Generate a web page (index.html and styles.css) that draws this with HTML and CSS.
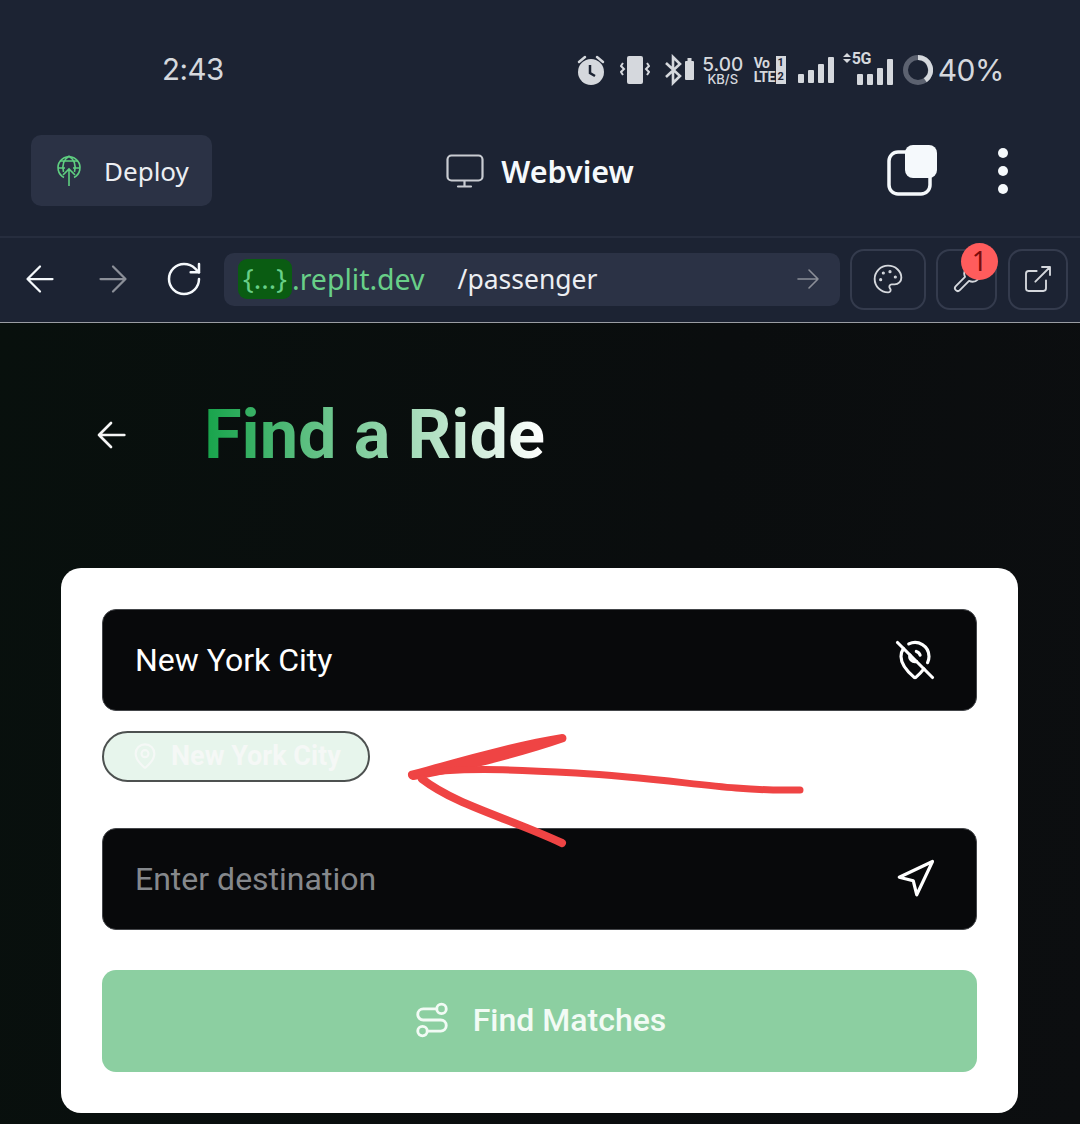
FILE: index.html
```html
<!DOCTYPE html>
<html lang="en">
<head>
    <meta charset="UTF-8">
    <meta name="viewport" content="width=device-width, initial-scale=1.0">
    <title>Find a Ride</title>
    <link rel="stylesheet" href="styles.css">
</head>
<body>
    <div class="status-bar">
        <span class="clock">2:43</span>
        <div class="status-icons">
            <svg class="st-alarm" width="28" height="30" viewBox="0 0 28 30">
                <path d="M2 7l6-5M26 7l-6-5" stroke="#d5d8dd" stroke-width="2.5" fill="none" stroke-linecap="round"/>
                <circle cx="14" cy="17" r="13" fill="#d5d8dd"/>
                <path d="M13 10v8l5 3" stroke="#1c2333" stroke-width="2.5" fill="none"/>
            </svg>
            <svg class="st-vibrate" width="30" height="30" viewBox="0 0 30 30">
                <rect x="7" y="1" width="16" height="28" rx="2" fill="#d5d8dd"/>
                <path d="M3 8l-2 3 3 3-3 3 2 3M27 8l2 3-3 3 3 3-2 3" stroke="#d5d8dd" stroke-width="2" fill="none"/>
            </svg>
            <svg class="st-bt" width="29" height="32" viewBox="0 0 29 30">
                <path d="M1 8l14 13-7 7V2l7 7L1 22" stroke="#d5d8dd" stroke-width="2.600" fill="none"/>
                <rect x="20" y="6" width="9" height="19" rx="1" fill="#d5d8dd"/>
                <rect x="22.500" y="3" width="4" height="3" fill="#d5d8dd"/>
            </svg>
            <div class="st-speed"><span class="speed-num">5.00</span><span class="speed-unit">KB/S</span></div>
            <div class="st-volte">
                <span>Vo</span><span class="sim">1</span>
                <span>LTE</span><span class="sim">2</span>
            </div>
            <div class="bars">
                <i class="b1"></i><i class="b2"></i><i class="b3"></i><i class="b4"></i>
            </div>
            <div class="st-5g">
                <div class="updown"><i></i><i></i></div>
                <span class="tag-5g">5G</span>
                <div class="bars small">
                    <i class="b2"></i><i class="b3"></i><i class="b4"></i><i class="b5"></i>
                </div>
            </div>
            <svg class="st-ring" width="30" height="30" viewBox="0 0 30 30">
                <circle cx="15" cy="15" r="12.500" fill="none" stroke="#5c6270" stroke-width="5"/>
                <path d="M15 2.500a12.500 12.500 0 0 1 7.300 22.700" fill="none" stroke="#d5d8dd" stroke-width="5"/>
            </svg>
            <span class="battery">40%</span>
        </div>
    </div>

    <header class="top-bar">
        <div class="deploy">
            <svg width="26" height="32" viewBox="0 0 26 32" fill="none" stroke="#5fcf80" stroke-width="1.600">
                <path d="M8 22.500a11 11 0 1 1 10 0"/>
                <path d="M4 6h18M2 13h7M17 13h7M13 1c-6 4-7 10-5.500 16M13 1c6 4 7 10 5.500 16"/>
                <path d="M13 31V14M7 20l6-6 6 6"/>
            </svg>
            <span>Deploy</span>
        </div>
        <div class="tab-title">
            <svg width="38" height="34" viewBox="0 0 38 34" fill="none" stroke="#c9ccd2" stroke-width="2.200" stroke-linecap="round">
                <rect x="1.500" y="1.500" width="35" height="25" rx="4"/>
                <path d="M18.500 27v5M12 32.500h13"/>
            </svg>
            <span>Webview</span>
        </div>
        <div class="top-actions">
            <svg width="50" height="51" viewBox="0 0 50 51">
                <rect x="2" y="7" width="41" height="42" rx="9" fill="none" stroke="#f5f9fc" stroke-width="3.500"/>
                <rect x="18" y="0" width="32" height="33" rx="8" fill="#f5f9fc"/>
            </svg>
            <div class="dots"><i></i><i></i><i></i></div>
        </div>
    </header>

    <nav class="url-bar">
        <svg class="nav-back" width="30" height="30" viewBox="0 0 24 24" fill="none" stroke="#f5f9fc" stroke-width="1.800" stroke-linecap="round" stroke-linejoin="round">
            <path d="M22 12H2M12 22 2 12 12 2"/>
        </svg>
        <svg class="nav-forward" width="30" height="30" viewBox="0 0 24 24" fill="none" stroke="#8b8f98" stroke-width="1.800" stroke-linecap="round" stroke-linejoin="round">
            <path d="M2 12h20M12 2l10 10-10 10"/>
        </svg>
        <svg class="nav-reload" width="40" height="40" viewBox="0 0 24 24" fill="none" stroke="#f5f9fc" stroke-width="1.500" stroke-linecap="round" stroke-linejoin="round">
            <path d="M21 12a9 9 0 1 1-9-9c2.520 0 4.930 1 6.740 2.740L21 8"/>
            <path d="M21 3v5h-5"/>
        </svg>
        <div class="address">
            <span class="repl-id">{...}</span><span class="host">.replit.dev</span>
            <span class="path">/passenger</span>
            <svg width="24" height="24" viewBox="0 0 24 24" fill="none" stroke="#8b8f98" stroke-width="1.600" stroke-linecap="round" stroke-linejoin="round">
                <path d="M2 12h20M13 3l9 9-9 9"/>
            </svg>
        </div>
        <button class="tool palette">
            <svg width="32" height="32" viewBox="0 0 24 24" fill="none" stroke="#d5d8dd" stroke-width="1.400" stroke-linecap="round" stroke-linejoin="round">
                <path d="M12 22a1 1 0 0 1 0-20 10 9 0 0 1 10 9 5 5 0 0 1-5 5h-2.250a1.750 1.750 0 0 0-1.400 2.800l.3.4a1.750 1.750 0 0 1-1.400 2.800z"/>
                <circle cx="13.500" cy="6.500" r=".5" fill="#d5d8dd"/>
                <circle cx="17.500" cy="10.500" r=".5" fill="#d5d8dd"/>
                <circle cx="6.500" cy="12.500" r=".5" fill="#d5d8dd"/>
                <circle cx="8.500" cy="7.500" r=".5" fill="#d5d8dd"/>
            </svg>
        </button>
        <button class="tool wrench">
            <svg width="32" height="32" viewBox="0 0 24 24" fill="none" stroke="#d5d8dd" stroke-width="1.400" stroke-linecap="round" stroke-linejoin="round">
                <path d="M14.700 6.300a1 1 0 0 0 0 1.400l1.600 1.600a1 1 0 0 0 1.400 0l3.770-3.770a6 6 0 0 1-7.940 7.940l-6.910 6.910a2.120 2.120 0 0 1-3-3l6.910-6.910a6 6 0 0 1 7.940-7.940l-3.760 3.760z"/>
            </svg>
            <span class="badge">1</span>
        </button>
        <button class="tool external">
            <svg width="32" height="32" viewBox="0 0 24 24" fill="none" stroke="#d5d8dd" stroke-width="1.400" stroke-linecap="round" stroke-linejoin="round">
                <path d="M15 3h6v6M10 14 21 3M18 13v6a2 2 0 0 1-2 2H5a2 2 0 0 1-2-2V8a2 2 0 0 1 2-2h6"/>
            </svg>
        </button>
    </nav>

    <main class="page">
        <div class="page-head">
            <svg width="32" height="32" viewBox="0 0 24 24" fill="none" stroke="#f5f5f5" stroke-width="2" stroke-linecap="round" stroke-linejoin="round">
                <path d="M22 12H3M12 21l-9-9 9-9"/>
            </svg>
            <h1>Find a Ride</h1>
        </div>

        <section class="card">
            <div class="field">
                <input type="text" value="New York City">
                <svg width="42" height="42" viewBox="0 0 24 24" fill="none" stroke="#fff" stroke-width="1.800" stroke-linecap="round" stroke-linejoin="round">
                    <path d="M12.750 7.090a3 3 0 0 1 2.160 2.160"/>
                    <path d="M17.072 17.072c-1.634 2.170-3.527 3.912-4.471 4.727a1 1 0 0 1-1.202 0C9.539 20.193 4 14.993 4 10a8 8 0 0 1 1.432-4.568"/>
                    <path d="m2 2 20 20"/>
                    <path d="M8.475 2.818A8 8 0 0 1 20 10c0 1.183-.31 2.377-.81 3.533"/>
                    <path d="M9.130 9.130a3 3 0 0 0 3.740 3.740"/>
                </svg>
            </div>

            <button class="chip">
                <svg width="28" height="32" viewBox="0 0 24 24" fill="none" stroke="#f5f8f6" stroke-width="1.800" stroke-linecap="round" stroke-linejoin="round">
                    <path d="M20 10c0 5-5.540 10.190-7.400 11.800a1 1 0 0 1-1.200 0C9.540 20.190 4 15 4 10a8 8 0 0 1 16 0"/>
                    <circle cx="12" cy="10" r="3"/>
                </svg>
                New York City
            </button>

            <div class="field">
                <input type="text" placeholder="Enter destination">
                <svg width="42" height="42" viewBox="0 0 24 24" fill="none" stroke="#fff" stroke-width="1.800" stroke-linecap="round" stroke-linejoin="round">
                    <polygon points="3 11 22 2 13 21 11 13 3 11"/>
                </svg>
            </div>

            <button class="find-btn">
                <svg width="38" height="38" viewBox="0 0 24 24" fill="none" stroke="#f2fbf5" stroke-width="1.800" stroke-linecap="round" stroke-linejoin="round">
                    <circle cx="6" cy="19" r="3"/>
                    <path d="M9 19h8.500a3.500 3.500 0 0 0 0-7h-11a3.500 3.500 0 0 1 0-7H15"/>
                    <circle cx="18" cy="5" r="3"/>
                </svg>
                Find Matches
            </button>

            <!-- red arrow drawn over the screenshot -->
            <svg class="scribble" width="400" height="120" viewBox="0 0 400 120" fill="none">
                <path d="M4 38C50 26 110 8 156 1c5 0 6 6 2 8C120 22 70 36 8 47c-6 0-8-7-4-9z" fill="#ef4444"/>
                <path d="M6 42C50 34 100 36 170 40S290 52 330 55 370 57 394 57" stroke="#ef4444" stroke-width="7" stroke-linecap="round"/>
                <path d="M16 46C50 72 100 84 156 110" stroke="#ef4444" stroke-width="8" stroke-linecap="round"/>
            </svg>
        </section>
    </main>
</body>
</html>
```

FILE: styles.css
```css
* {
    box-sizing: border-box;
}

body {
    margin: 0;
    width: 1080px;
    height: 1124px;
    overflow: hidden;
    background: #090d0c;
    font-family: "Noto Sans", "Liberation Sans", sans-serif;
    color: #f5f9fc;
}

/* phone status bar */
.status-bar {
    height: 107px;
    background: #1c2333;
    display: flex;
    align-items: center;
    justify-content: space-between;
    padding: 40px 76px 0 162px;
    color: #d5d8dd;
    font-family: Inter, sans-serif;
}

.clock {
    font-size: 29.500px;
    font-weight: 400;
    line-height: 1;
    margin-top: -7px;
    letter-spacing: -.5px;
}

.status-icons {
    display: flex;
    align-items: center;
    margin-top: -7px;
}

.st-alarm {
    margin-right: 15px;
}

.st-vibrate {
    margin-right: 15px;
}

.st-bt {
    margin-right: 8px;
}

.st-speed {
    width: 42px;
    margin-right: 10px;
    display: flex;
    flex-direction: column;
    align-items: center;
    line-height: 1;
}

.speed-num {
    font-size: 19px;
    font-weight: 500;
    line-height: 17px;
}

.speed-unit {
    font-size: 13px;
    font-weight: 500;
    line-height: 12px;
}

.st-volte {
    width: 32px;
    margin-right: 12px;
    display: grid;
    grid-template-columns: 1fr 10px;
    font-family: Roboto, sans-serif;
    font-size: 14px;
    font-weight: 700;
    line-height: 14px;
    letter-spacing: -.5px;
}

.sim {
    background: #d5d8dd;
    color: #1c2333;
    text-align: center;
    font-size: 11px;
    letter-spacing: 0;
}

.bars {
    display: flex;
    align-items: flex-end;
    gap: 4px;
    height: 26px;
    margin-right: 9px;
}

.bars i {
    width: 6px;
    background: #d5d8dd;
    border-radius: 1px;
}

.b1 {
    height: 9px;
}

.b2 {
    height: 13px;
}

.b3 {
    height: 19px;
}

.b4 {
    height: 26px;
}

.b5 {
    height: 26px;
}

.st-5g {
    position: relative;
    width: 50px;
    height: 30px;
    margin-right: 10px;
    display: flex;
    align-items: flex-end;
    justify-content: flex-end;
}

.bars.small {
    margin: 0;
    gap: 4px;
}

.bars.small .b2,
.bars.small .b3 {
    height: 11px;
}

.bars.small .b4 {
    height: 17px;
}

.tag-5g {
    position: absolute;
    left: 9px;
    top: -4px;
    font-family: Roboto, sans-serif;
    font-size: 16px;
    font-weight: 700;
    line-height: 1;
    letter-spacing: -.5px;
}

.updown {
    position: absolute;
    left: 0;
    top: -2px;
    display: flex;
    flex-direction: column;
    gap: 2px;
}

.updown i {
    width: 0;
    height: 0;
    border-left: 4px solid transparent;
    border-right: 4px solid transparent;
    border-bottom: 4px solid #d5d8dd;
}

.updown i + i {
    border-bottom: 0;
    border-top: 4px solid #d5d8dd;
}

.st-ring {
    margin-right: 5px;
}

.battery {
    font-size: 30px;
    line-height: 1;
    letter-spacing: -.5px;
}

/* replit header */
.top-bar {
    height: 131px;
    background: #1c2333;
    border-bottom: 2px solid #262d3e;
    display: grid;
    grid-template-columns: 1fr auto 1fr;
    align-items: center;
    padding: 0 31px 2px;
}

.deploy {
    width: 181px;
    height: 71px;
    background: #2b3245;
    border-radius: 10px;
    display: flex;
    align-items: center;
    gap: 22px;
    padding-left: 25px;
    font-size: 26px;
    color: #eceef2;
}

.tab-title {
    display: flex;
    align-items: center;
    gap: 17px;
    font-size: 30.500px;
    font-weight: 600;
}

.top-actions {
    display: flex;
    align-items: center;
    justify-content: flex-end;
    gap: 61px;
    padding-right: 41px;
}

.dots {
    display: flex;
    flex-direction: column;
    gap: 8px;
}

.dots i {
    width: 10px;
    height: 10px;
    border-radius: 50%;
    background: #f5f9fc;
}

.url-bar {
    height: 85px;
    background: #1c2333;
    border-bottom: 1px solid #9a9da3;
    display: flex;
    align-items: center;
    padding: 0 12px 2px 25px;
}

.nav-back {
    margin-right: 43px;
}

.nav-forward {
    margin-right: 36px;
}

.nav-reload {
    margin-right: 20px;
    flex-shrink: 0;
}

.address {
    width: 616px;
    height: 53px;
    background: #2b3245;
    border-radius: 10px;
    margin-right: 10px;
    display: flex;
    align-items: center;
    padding: 0 20px 0 14px;
}

.address svg {
    margin-left: auto;
}

.repl-id {
    width: 54px;
    height: 40px;
    background: #0a5c12;
    border-radius: 9px;
    color: #68cf88;
    font-size: 28px;
    text-align: center;
    line-height: 38px;
    white-space: nowrap;
}

.host {
    color: #68cf88;
    font-size: 28.500px;
    margin-right: 33px;
}

.path {
    color: #eceef2;
    font-size: 26.500px;
}

.tool {
    position: relative;
    height: 61px;
    background: transparent;
    border: 2px solid #343b4d;
    border-radius: 14px;
    padding: 0;
    display: flex;
    align-items: center;
    justify-content: center;
}

.palette {
    width: 76px;
    margin-right: 10px;
}

.wrench {
    width: 61px;
    margin-right: 11px;
}

.external {
    width: 60px;
}

.badge {
    position: absolute;
    top: -8px;
    left: 23px;
    width: 37px;
    height: 37px;
    border-radius: 50%;
    background: #ff5c5c;
    color: #7a0b0b;
    font-size: 27px;
    line-height: 35px;
    text-align: center;
    font-family: "Noto Sans", sans-serif;
}

/* the app itself */
.page {
    height: 801px;
    padding: 0 62px 0 61px;
    background: linear-gradient(100deg, #08100d, #0a0d0e 60%, #0c0e10);
    font-family: Roboto, sans-serif;
}

.page-head {
    height: 245px;
    display: flex;
    align-items: flex-start;
    padding: 72px 0 0 34px;
}

.page-head svg {
    margin: 24px 0 0 0;
}

.page-head h1 {
    margin: 0 0 0 77px;
    font-size: 68.500px;
    font-weight: 700;
    line-height: 80px;
    background: linear-gradient(to right, #16a34a, #fff);
    -webkit-background-clip: text;
    background-clip: text;
    color: transparent;
}

.card {
    position: relative;
    height: 545px;
    background: #fff;
    border-radius: 20px;
    padding: 41px;
}

.field {
    height: 102px;
    background: #08090b;
    border: 1px solid #44464a;
    border-radius: 14px;
    display: flex;
    align-items: center;
    padding: 0 40px 0 32px;
}

.field input {
    flex: 1;
    min-width: 0;
    background: none;
    border: 0;
    padding: 0;
    outline: 0;
    font-family: Roboto, sans-serif;
    font-size: 32px;
    font-weight: 400;
    color: #fff;
}

.field input::placeholder {
    color: #85888c;
}

.chip {
    width: 268px;
    height: 51px;
    margin: 20px 0 46px;
    display: flex;
    align-items: center;
    gap: 12px;
    padding: 0 0 2px 27px;
    background: #e7f5ec;
    border: 2px solid #4d5150;
    border-radius: 26px;
    font-family: Roboto, sans-serif;
    font-size: 27px;
    font-weight: 700;
    color: #f5f8f6;
    white-space: nowrap;
}

.find-btn {
    width: 100%;
    height: 102px;
    margin-top: 40px;
    display: flex;
    align-items: center;
    justify-content: center;
    gap: 22px;
    background: #8ccfa1;
    border: 0;
    border-radius: 14px;
    padding: 0 0 2px;
    font-family: Roboto, sans-serif;
    font-size: 32px;
    font-weight: 500;
    color: #f2fbf5;
}

.scribble {
    position: absolute;
    left: 345px;
    top: 165px;
}
```
